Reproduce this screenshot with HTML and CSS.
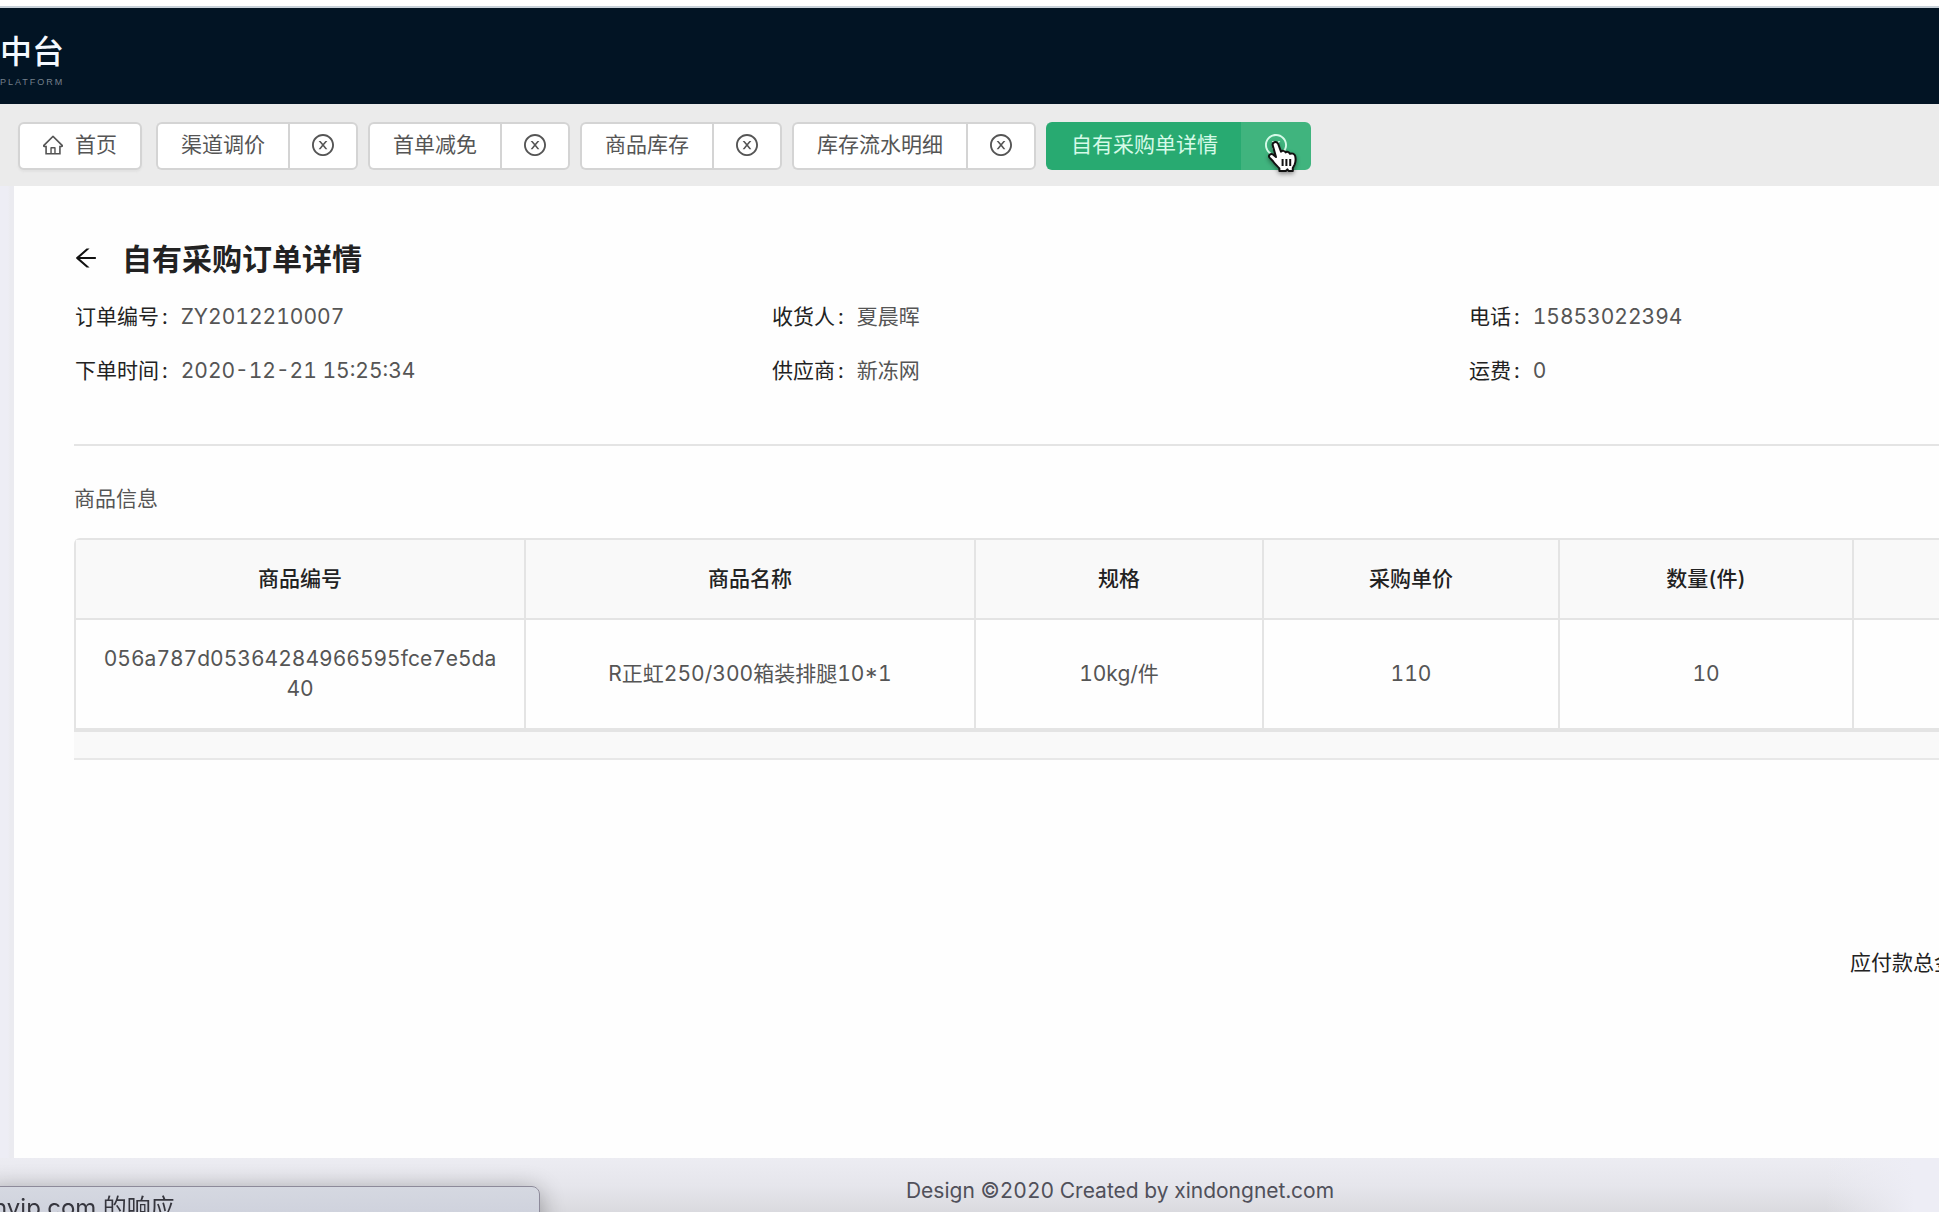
FILE: index.html
```html
<!DOCTYPE html>
<html lang="zh-CN">
<head>
<meta charset="utf-8">
<title>自有采购订单详情</title>
<link rel="stylesheet" href="styles.css">
</head>
<body>
<svg class="sprite" aria-hidden="true">
  <symbol id="home" viewBox="64 64 896 896"><path d="M946.5 505L560.1 118.8l-25.9-25.9a31.5 31.5 0 0 0-44.4 0L77.5 505a63.9 63.9 0 0 0-18.8 46c.4 35.2 29.7 63.3 64.9 63.3h42.5V940h691.8V614.3h43.4c17.1 0 33.2-6.7 45.3-18.8a63.6 63.6 0 0 0 18.7-45.3c0-17-6.7-33.1-18.8-45.2zM568 868H456V664h112v204zm217.9-325.7V868H632V640c0-22.1-17.9-40-40-40H432c-22.1 0-40 17.9-40 40v228H238.1V542.3h-96l370-369.7 23.1 23.1L882 542.3h-96.1z"/></symbol>
  <symbol id="close" viewBox="64 64 896 896"><path d="M685.4 354.8c0-4.4-3.6-8-8-8l-66 .3L512 465.6l-99.3-118.4-66.1-.3c-4.4 0-8 3.5-8 8 0 1.9.7 3.7 1.9 5.2l130.1 155L340.5 670a8.32 8.32 0 0 0-1.9 5.2c0 4.4 3.6 8 8 8l66.1-.3L512 564.4l99.3 118.4 66 .3c4.4 0 8-3.5 8-8 0-1.9-.7-3.7-1.9-5.2L553.5 515l130.1-155c1.2-1.4 1.8-3.3 1.8-5.2z"/><path d="M512 65C264.6 65 64 265.6 64 513s200.6 448 448 448 448-200.6 448-448S759.4 65 512 65zm0 820c-205.4 0-372-166.6-372-372s166.6-372 372-372 372 166.6 372 372-166.6 372-372 372z"/></symbol>
  <symbol id="back" viewBox="64 64 896 896"><path d="M872 474H286.9l350.2-304c5.6-4.9 2.2-14-5.2-14h-88.5c-3.9 0-7.6 1.4-10.5 3.9L155 487.8a31.96 31.96 0 0 0 0 48.3L535.1 866c1.5 1.3 3.3 2 5.2 2h91.5c7.4 0 10.8-9.2 5.2-14L286.9 550H872c4.4 0 8-3.6 8-8v-60c0-4.4-3.6-8-8-8z"/></symbol>
</svg>
<header class="topbar">
  <div class="logo">
    <span class="logo-name">中台</span>
    <span class="logo-sub">PLATFORM</span>
  </div>
</header>
<nav class="tabs">
  <button class="tab home" type="button"><svg class="icon"><use href="#home"/></svg>首页</button>
  <div class="tab-group"><button class="tab" type="button">渠道调价</button><button class="tab close" type="button" aria-label="关闭"><svg class="icon"><use href="#close"/></svg></button></div>
  <div class="tab-group"><button class="tab" type="button">首单减免</button><button class="tab close" type="button" aria-label="关闭"><svg class="icon"><use href="#close"/></svg></button></div>
  <div class="tab-group"><button class="tab" type="button">商品库存</button><button class="tab close" type="button" aria-label="关闭"><svg class="icon"><use href="#close"/></svg></button></div>
  <div class="tab-group"><button class="tab" type="button">库存流水明细</button><button class="tab close" type="button" aria-label="关闭"><svg class="icon"><use href="#close"/></svg></button></div>
  <div class="tab-group active"><button class="tab" type="button">自有采购单详情</button><button class="tab close" type="button" aria-label="关闭"><svg class="icon"><use href="#close"/></svg></button>
    <svg class="cursor" viewBox="0 0 32 34" aria-hidden="true"><path d="M7.5 2.2C9 1.6 10.6 2.4 11.2 4L14 11.600C14.800 10.400 17.800 10.600 18.600 12.400C19.800 11.400 22.300 11.800 23 13.800C24.800 12.900 27.600 13.600 28.200 16C29 19.500 28.600 22.300 27.600 24.600L25.800 28V31H21.600L20.400 29.400L18.800 31H12.400V28.400C10.200 25.800 7.600 23.800 5.800 21L2.600 17.600C0.800 15.400 3.600 13 6 14.400L9 17L5.800 5.600C5.300 4 6 2.700 7.500 2.200Z"/><path d="M15.600 19V26M19.400 19V26M23.200 19V26"/></svg>
  </div>
</nav>
<div class="workspace">
  <main class="card">
    <div class="heading">
      <button class="back" type="button" aria-label="返回"><svg><use href="#back"/></svg></button>
      <h1>自有采购订单详情</h1>
    </div>
    <dl class="facts">
      <div><dt>订单编号</dt><dd>ZY2012210007</dd></div>
      <div><dt>收货人</dt><dd>夏晨晖</dd></div>
      <div><dt>电话</dt><dd>15853022394</dd></div>
      <div><dt>下单时间</dt><dd>2020-12-21 15:25:34</dd></div>
      <div><dt>供应商</dt><dd>新冻网</dd></div>
      <div><dt>运费</dt><dd>0</dd></div>
    </dl>
    <hr class="divider">
    <h2 class="section">商品信息</h2>
    <table class="goods">
      <colgroup><col class="c-id"><col class="c-name"><col class="c-spec"><col class="c-price"><col class="c-count"><col></colgroup>
      <thead><tr><th>商品编号</th><th>商品名称</th><th>规格</th><th>采购单价</th><th>数量(件)</th><th></th></tr></thead>
      <tbody><tr><td>056a787d05364284966595fce7e5da40</td><td>R正虹250/300箱装排腿10*1</td><td>10kg/件</td><td>110</td><td>10</td><td></td></tr></tbody>
    </table>
    <div class="table-foot"></div>
    <p class="total">应付款总金额：</p>
  </main>
  <footer class="footer">Design ©2020 Created by xindongnet.com</footer>
</div>
<aside class="sheet">nvip.com 的响应</aside>
</body>
</html>
```
FILE: styles.css
```css
* { box-sizing: border-box; }

body {
  margin: 0;
  height: 100vh;
  display: flex;
  flex-direction: column;
  overflow: hidden;
  background: #ededf5;
  color: #555;
  font: 21px/30px Inter, "Noto Sans CJK SC", sans-serif;
  font-variant-numeric: tabular-nums;
}

button {
  margin: 0;
  font: inherit;
  color: inherit;
  cursor: pointer;
}

h1, h2, p, dl, dd { margin: 0; }

.sprite { position: absolute; width: 0; height: 0; }

.topbar {
  flex: none;
  height: 104px;
  border-top: 6px solid #fff;
  background: #021424;
  box-shadow: inset 0 2px #c8d1d9;
}

.logo {
  display: flex;
  flex-direction: column;
  padding-top: 24px;
  color: #f4f9ff;
}
.logo-name { font-size: 32px; line-height: 44px; font-weight: 500; }
.logo-sub {
  font: 9px/16px "Liberation Sans", sans-serif;
  letter-spacing: 2px;
  color: #75808c;
}

.tabs {
  flex: none;
  display: flex;
  gap: 10px;
  padding: 18px;
  height: 82px;
  background: #ebebeb;
}
.tab-group { display: flex; position: relative; }
.tab {
  display: flex;
  align-items: center;
  height: 48px;
  padding: 0 23px 2px;
  border: 2px solid #d4d4d4;
  border-radius: 6px;
  background: #fff;
  white-space: nowrap;
}
.home { gap: 12px; margin-right: 4px; box-shadow: 0 2px 2px #e2e2e2; }
.tab-group .tab:first-child { border-radius: 6px 0 0 6px; border-right: 0; }
.tab-group .close { padding: 0 22px 2px; border-radius: 0 6px 6px 0; }
.icon { width: 22px; height: 22px; fill: currentColor; }
.home .icon { width: 20px; height: 20px; }
.active .tab { background: #28aa71; border-color: #28aa71; color: #d5fae8; }
.active .close { background: #40b47e; border-color: #40b47e; }

.cursor {
  position: absolute;
  right: 12px;
  top: 18px;
  width: 32px;
  height: 34px;
  fill: #fff;
  stroke: #111;
  stroke-width: 2;
  stroke-linejoin: round;
  filter: drop-shadow(0 2px 2px #0006);
}

/* The workspace is wider than the window and runs off its right edge. */
.workspace {
  flex: 1;
  display: flex;
  flex-direction: column;
  width: calc(100% + 287px);
  padding-left: 14px;
  background: linear-gradient(90deg, #ededf5 8px, #ebebf0 10px, #ebebf0 14px, #ededf5 14px);
}
.card {
  flex: 1;
  padding: 51px 60px 0;
  background: #fefefe;
}

.heading { display: flex; align-items: center; gap: 24px; }
.heading h1 { font-size: 30px; line-height: 45px; font-weight: 600; color: #222; }
.back { display: flex; padding: 0 0 4px; border: 0; background: none; color: #111; }
.back svg { width: 24px; height: 24px; fill: currentColor; }

.facts {
  display: grid;
  grid-template-columns: repeat(3, 1fr);
  row-gap: 24px;
  padding: 20px 0 58px 1px;
}
.facts > div { display: flex; }
.facts dt { color: #222; }
.facts dt::after { content: ":"; margin: 0 13px 0 3px; }

.divider { margin: 0; border: 0; height: 2px; background: #e4e4e4; }
.section { padding: 38px 0 24px; font-size: 21px; font-weight: 400; }

.goods {
  width: 100%;
  table-layout: fixed;
  border-collapse: separate;
  border-spacing: 0;
  border: 2px solid #e4e4e4;
  border-width: 2px 0 2px 2px;
  border-radius: 6px 0 0 0;
  text-align: center;
}
.goods th, .goods td {
  padding: 24px;
  border: solid #e4e4e4;
  border-width: 0 2px 2px 0;
  word-break: break-all;
}
.goods th { background: #f9f9f9; color: #222; font-weight: 500; }
.c-id, .c-name { width: 450px; }
.c-spec { width: 288px; }
.c-price { width: 296px; }
.c-count { width: 294px; }

.table-foot { height: 28px; background: #f9f9f9; border-bottom: 2px solid #e8e8e8; }
.total { padding-top: 188px; margin-left: 1776px; white-space: nowrap; color: #222; }

.footer {
  flex: none;
  height: 54px;
  margin-left: -14px;
  padding: 18px 0 0 14px;
  text-align: center;
  color: #50505a;
  background: linear-gradient(90deg, #ededf500 82%, #ededf5 86%), linear-gradient(#ececf2, #e6e6ec 50%, #dadadf);
}

.sheet {
  position: fixed;
  left: -12px;
  bottom: -30px;
  width: 552px;
  height: 56px;
  padding: 5px 4px;
  border: 1px solid #8d8a9a;
  border-radius: 0 8px 0 0;
  background: linear-gradient(#d5d8e1, #c9ccd8);
  box-shadow: 0 4px 24px #0005;
  font-size: 24px;
  line-height: 32px;
  color: #36363e;
}
```
